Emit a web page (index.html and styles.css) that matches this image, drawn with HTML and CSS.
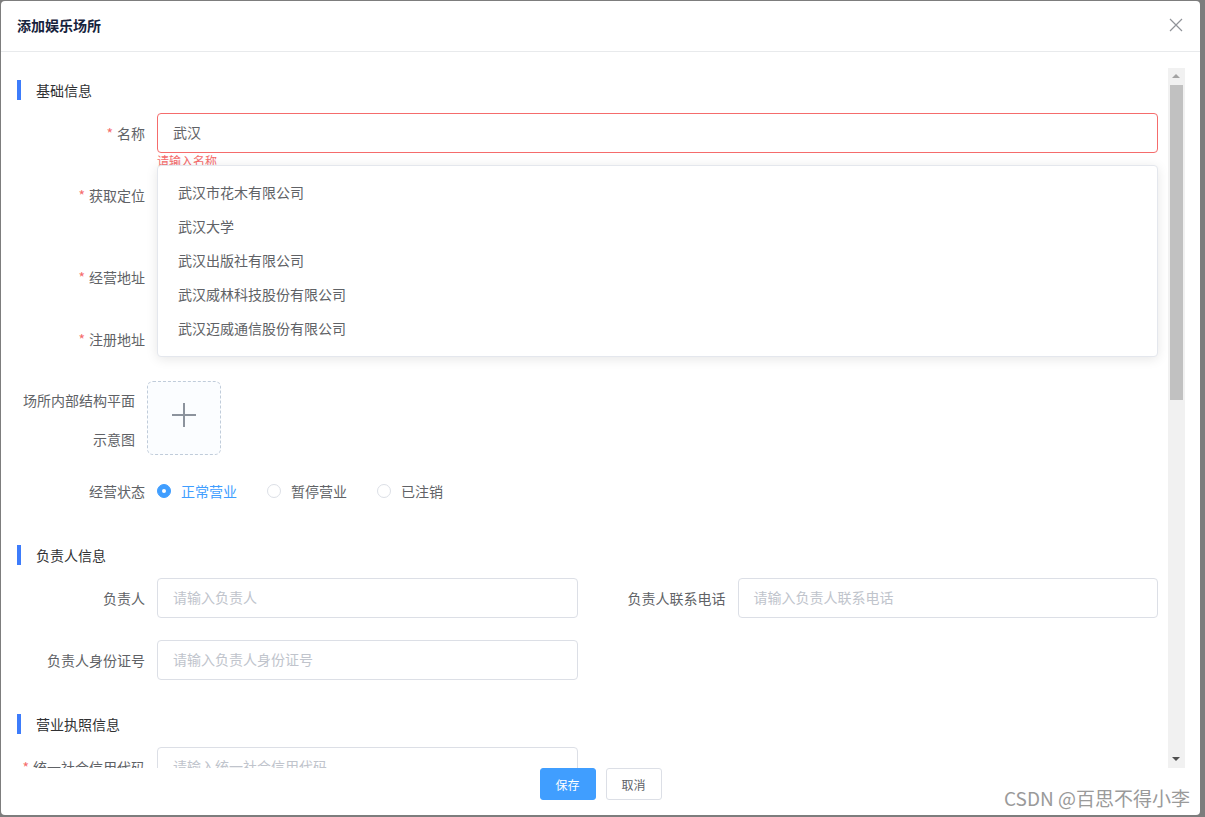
FILE: index.html
```html
<!DOCTYPE html>
<html lang="zh-CN">
<head>
<meta charset="utf-8">
<title>添加娱乐场所</title>
<link rel="stylesheet" href="styles.css">
</head>
<body>
<div class="dialog">
  <div class="dialog-header">
    <span class="dialog-title">添加娱乐场所</span>
    <svg class="close" width="14" height="14" viewBox="0 0 14 14"><path d="M1 1L13 13M13 1L1 13" stroke="#909399" stroke-width="1.2" fill="none"/></svg>
  </div>
  <div class="dialog-body">
    <div class="content">
      <div class="section first"><span class="bar"></span><span class="section-text">基础信息</span></div>

      <div class="form-item has-dropdown">
        <label class="label"><span class="star">*</span>名称</label>
        <div class="field">
          <div class="input error"><span class="value">武汉</span></div>
          <div class="error-msg">请输入名称</div>
        </div>
        <ul class="dropdown">
          <li>武汉市花木有限公司</li>
          <li>武汉大学</li>
          <li>武汉出版社有限公司</li>
          <li>武汉威林科技股份有限公司</li>
          <li>武汉迈威通信股份有限公司</li>
        </ul>
      </div>

      <div class="form-item tall">
        <label class="label"><span class="star">*</span>获取定位</label>
        <div class="field"></div>
      </div>
      <div class="form-item">
        <label class="label"><span class="star">*</span>经营地址</label>
        <div class="field"></div>
      </div>
      <div class="form-item">
        <label class="label"><span class="star">*</span>注册地址</label>
        <div class="field"></div>
      </div>

      <div class="form-item upload-item">
        <label class="label narrow">场所内部结构平面示意图</label>
        <div class="upload">
          <svg width="28" height="28" viewBox="0 0 28 28"><path d="M14 2V26M2 14H26" stroke="#8c939d" stroke-width="2" fill="none"/></svg>
        </div>
      </div>

      <div class="form-item">
        <label class="label">经营状态</label>
        <div class="field radios">
          <span class="radio checked"><span class="circle"></span><span class="radio-text">正常营业</span></span>
          <span class="radio"><span class="circle"></span><span class="radio-text">暂停营业</span></span>
          <span class="radio"><span class="circle"></span><span class="radio-text">已注销</span></span>
        </div>
      </div>

      <div class="section"><span class="bar"></span><span class="section-text">负责人信息</span></div>
      <div class="grid">
        <div class="form-item">
          <label class="label">负责人</label>
          <div class="field"><div class="input"><span class="ph">请输入负责人</span></div></div>
        </div>
        <div class="form-item">
          <label class="label">负责人联系电话</label>
          <div class="field"><div class="input"><span class="ph">请输入负责人联系电话</span></div></div>
        </div>
        <div class="form-item">
          <label class="label">负责人身份证号</label>
          <div class="field"><div class="input"><span class="ph">请输入负责人身份证号</span></div></div>
        </div>
      </div>

      <div class="section"><span class="bar"></span><span class="section-text">营业执照信息</span></div>
      <div class="grid">
        <div class="form-item">
          <label class="label"><span class="star">*</span>统一社会信用代码</label>
          <div class="field"><div class="input"><span class="ph">请输入统一社会信用代码</span></div></div>
        </div>
      </div>
    </div>
    <div class="scrollbar">
      <div class="arrow up"></div>
      <div class="thumb"></div>
      <div class="track-rest"></div>
      <div class="arrow down"></div>
    </div>
  </div>
  <div class="dialog-footer">
    <button class="btn primary">保存</button>
    <button class="btn">取消</button>
  </div>
  <div class="watermark">CSDN @百思不得小李</div>
</div>
</body>
</html>
```

FILE: styles.css
```css
* { box-sizing: border-box; }
html, body { margin: 0; padding: 0; }
body {
  background: #7d7d7d;
  width: 1205px;
  height: 817px;
  overflow: hidden;
  font-family: "Noto Sans CJK SC", "Microsoft YaHei", sans-serif;
  font-size: 14px;
  color: #606266;
}
.dialog {
  position: relative;
  margin: 1px 0 0 1px;
  width: 1199px;
  height: 814px;
  background: #fff;
  border-radius: 4px;
  display: flex;
  flex-direction: column;
}
.dialog-header {
  height: 51px;
  flex: none;
  border-bottom: 1px solid #e8eaec;
  display: flex;
  align-items: center;
  justify-content: space-between;
  padding: 0 15px 2px 16px;
}
.dialog-title {
  font-size: 14px;
  font-weight: 600;
  color: #17233d;
}
.close { display: block; margin-right: 2px; }
.dialog-body {
  flex: none;
  height: 716px;
  display: flex;
  overflow: hidden;
}
.content {
  width: 1157px;
  padding: 28px 0 0 16px;
  flex: none;
}
.section {
  display: flex;
  align-items: center;
  height: 20px;
  margin: 34px 0 13px;
}
.section.first { margin-top: 0; }
.grid + .section { margin-top: 12px; }
.bar {
  width: 4px;
  height: 20px;
  background: #3d7cfb;
  margin-right: 15px;
}
.section-text {
  font-size: 14px;
  color: #303133;
  line-height: 20px;
}
.form-item {
  position: relative;
  display: flex;
  min-height: 40px;
  margin-bottom: 22px;
}
.form-item.tall { height: 60px; }
.label {
  width: 140px;
  flex: none;
  padding-right: 12px;
  text-align: right;
  line-height: 40px;
  font-size: 14px;
  color: #606266;
  white-space: normal;
}
.label.narrow {
  width: 130px;
  line-height: 39px;
}
.star {
  color: #f56c6c;
  margin-right: 4px;
}
.field {
  flex: 1;
  position: relative;
}
.input {
  height: 40px;
  border: 1px solid #dcdfe6;
  border-radius: 4px;
  padding: 0 15px;
  line-height: 37px;
  font-size: 14px;
}
.input.error { border-color: #f56c6c; }
.value { color: #606266; }
.ph { color: #c0c4cc; }
.error-msg {
  position: absolute;
  top: 100%;
  left: 0;
  padding-top: 2px;
  font-size: 12px;
  line-height: 12px;
  color: #f56c6c;
}
.dropdown {
  position: absolute;
  top: 52px;
  left: 140px;
  right: 0;
  z-index: 5;
  margin: 0;
  padding: 10px 0;
  list-style: none;
  background: #fff;
  border: 1px solid #e4e7ed;
  border-radius: 4px;
  box-shadow: 0 2px 12px rgba(0, 0, 0, 0.1);
}
.dropdown li {
  height: 34px;
  line-height: 33px;
  padding: 0 20px;
  font-size: 14px;
  color: #606266;
}
.upload-item { margin-bottom: 12px; }
.upload {
  width: 74px;
  height: 74px;
  border: 1px dashed #c0ccda;
  border-radius: 6px;
  background: #fbfdff;
  display: flex;
  align-items: center;
  justify-content: center;
  padding-bottom: 7px;
}
.radios {
  display: flex;
  align-items: center;
  height: 40px;
}
.radio {
  display: flex;
  align-items: center;
  margin-right: 30px;
}
.circle {
  width: 14px;
  height: 14px;
  border: 1px solid #dcdfe6;
  border-radius: 50%;
  background: #fff;
  margin-right: 10px;
  position: relative;
}
.radio.checked .circle {
  border-color: #409eff;
  background: #409eff;
}
.radio.checked .circle::after {
  content: "";
  position: absolute;
  width: 4px;
  height: 4px;
  border-radius: 50%;
  background: #fff;
  left: 4px;
  top: 4px;
}
.radio-text { font-size: 14px; color: #606266; }
.radio.checked .radio-text { color: #409eff; }
.grid {
  display: grid;
  grid-template-columns: 1fr 1fr;
  column-gap: 20px;
}
.scrollbar {
  width: 17px;
  margin: 16px 0 0 10px;
  height: 700px;
  background: #f1f1f1;
  display: flex;
  flex-direction: column;
  align-items: center;
}
.arrow {
  height: 17px;
  width: 17px;
  flex: none;
  position: relative;
}
.arrow::after {
  content: "";
  position: absolute;
  left: 4px;
  border-left: 4px solid transparent;
  border-right: 4px solid transparent;
}
.arrow.up::after { top: 6px; border-bottom: 4px solid #a3a3a3; }
.arrow.down::after { top: 6px; border-top: 4px solid #505050; }
.thumb {
  width: 13px;
  height: 315px;
  background: #c1c1c1;
  flex: none;
}
.track-rest { flex: 1; }
.dialog-footer {
  flex: none;
  height: 47px;
  display: flex;
  justify-content: center;
  gap: 10px;
  padding-top: 0;
}
.btn {
  width: 56px;
  height: 32px;
  border: 1px solid #dcdfe6;
  border-radius: 3px;
  background: #fff;
  color: #606266;
  font-family: "Noto Sans CJK SC", sans-serif;
  font-size: 12px;
  padding: 0;
}
.btn.primary {
  background: #409eff;
  border-color: #409eff;
  color: #fff;
}
.watermark {
  position: absolute;
  right: 10px;
  bottom: 4px;
  font-family: "Noto Sans CJK SC", sans-serif;
  font-size: 19px;
  color: #9a9a9a;
  text-shadow: 0 0 1px #fff;
}
```
